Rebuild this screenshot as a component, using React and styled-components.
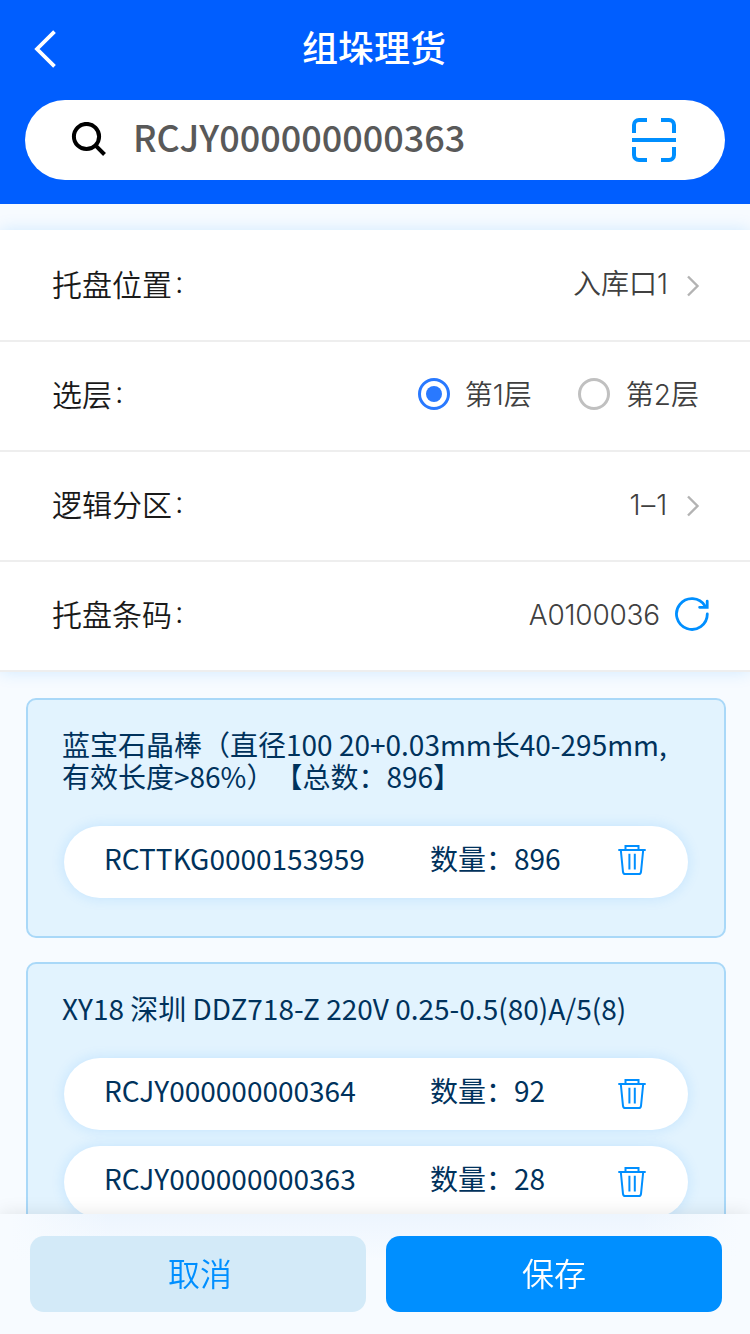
import React, { useState } from "react";
import styled, { createGlobalStyle } from "styled-components";

const GlobalStyle = createGlobalStyle`
  *, *::before, *::after { box-sizing: border-box; }
  body {
    margin: 0;
    background: #f7fbff;
    font-family: "Noto Sans CJK SC", sans-serif;
    text-spacing-trim: space-all;
    overflow: hidden;
  }
  button { font: inherit; border: 0; padding: 0; background: none; cursor: pointer; }
  svg { display: block; flex: none; }
`;

const Page = styled.div`
  height: 1334px;
  display: flex;
  flex-direction: column;
  overflow: hidden;
  background: #f7fbff;
`;

const Header = styled.header`
  flex: none;
  height: 204px;
  padding: 0 25px;
  background: #005eff;
`;

const TitleBar = styled.div`
  height: 100px;
  display: grid;
  grid-template-columns: 40px 1fr 40px;
  align-items: center;
  padding: 0 2px 2px 8px;
`;

const Title = styled.h1`
  margin: 0;
  color: #fff;
  font-size: 36px;
  font-weight: 500;
  line-height: 52px;
  text-align: center;
  padding: 0 8px 6px 0;
`;

const SearchBox = styled.div`
  height: 80px;
  display: flex;
  align-items: center;
  padding: 0 49px 0 46px;
  border-radius: 40px;
  background: #fff;
`;

const SearchText = styled.span`
  flex: 1;
  margin-left: 26px;
  padding-bottom: 8px;
  color: #595959;
  font-size: 36px;
  font-weight: 500;
  line-height: 54px;
`;

const Form = styled.section`
  flex: none;
  margin-top: 26px;
  background: #fff;
  border-bottom: 2px solid #eeeeee;
  box-shadow: 0 0 16px rgba(0, 144, 255, 0.16);
`;

const FormRow = styled.div`
  height: 110px;
  display: flex;
  align-items: center;
  justify-content: space-between;
  padding: 0 ${(p) => p.$right || 50}px ${(p) => p.$bottom || 0}px 52px;
  border-top: ${(p) => (p.$first ? 0 : 2)}px solid #eeeeee;
`;

const Label = styled.span`
  display: flex;
  align-items: center;
  color: #1a1a1a;
  font-size: 30px;
  line-height: 44px;
  font-weight: 350;
  padding-bottom: ${(p) => p.$lift}px;
`;

const Colon = styled.span`
  font-family: Inter, sans-serif;
  margin-left: 3px;
  padding-bottom: 2px;
`;

const Value = styled.span`
  display: flex;
  align-items: center;
  color: #404040;
  font-family: Inter, "Noto Sans CJK SC", sans-serif;
  font-size: 28px;
  font-weight: 350;
  line-height: 40px;
  letter-spacing: ${(p) => p.$spacing || 0}px;
  gap: ${(p) => p.$gap || 18}px;
`;

const ValueText = styled.span`
  padding-top: ${(p) => p.$drop || 0}px;
  padding-bottom: ${(p) => p.$lift || 0}px;
`;

const RadioGroup = styled.div`
  display: flex;
  gap: 46px;
`;

const RadioOption = styled.button`
  display: flex;
  align-items: center;
  gap: ${(p) => p.$gap}px;
`;

const RadioMark = styled.span`
  width: 32px;
  height: 32px;
  display: grid;
  place-items: center;
  border: 3px solid ${(p) => (p.$on ? "#2979ff" : "#c0c0c0")};
  border-radius: 50%;

  &::after {
    content: "";
    width: 16px;
    height: 16px;
    border-radius: 50%;
    background: ${(p) => (p.$on ? "#2979ff" : "transparent")};
  }
`;

const Goods = styled.main`
  display: flex;
  flex-direction: column;
  gap: 24px;
  padding: 26px 24px 0 26px;
`;

const Card = styled.article`
  flex: none;
  padding: 28px 36px 38px;
  border: 2px solid #a9d8f8;
  border-radius: 10px;
  background: #e2f3fe;
`;

const CardTitle = styled.h2`
  margin: 0 0 34px -2px;
  color: #00325c;
  font-size: 28px;
  font-weight: 400;
  line-height: 32px;
  white-space: pre-line;
`;

const ItemList = styled.div`
  display: flex;
  flex-direction: column;
  gap: 16px;
`;

const Item = styled.div`
  height: 72px;
  display: grid;
  grid-template-columns: 326px 188px 28px;
  align-items: center;
  padding-left: 40px;
  border-radius: 36px;
  background: #fff;
  box-shadow: 0 0 14px rgba(0, 144, 255, 0.14);
  color: #00325c;
  font-size: 28px;
  line-height: 40px;
`;

const ItemText = styled.span`
  padding-bottom: 8px;
`;

const DeleteButton = styled.button`
  padding-bottom: ${(p) => p.$lift}px;
`;

const Footer = styled.footer`
  position: fixed;
  left: 0;
  bottom: 0;
  width: 750px;
  height: 120px;
  display: grid;
  grid-template-columns: 336px 336px;
  gap: 20px;
  padding: 22px 28px 22px 30px;
  background:
    linear-gradient(to right, #f7fbff 10px, rgba(247, 251, 255, 0) 110px, rgba(247, 251, 255, 0) 640px, #f7fbff 740px),
    linear-gradient(#edf5fe, #f7fbff 46px);
  box-shadow: 0 0 18px rgba(0, 0, 0, 0.1);
`;

const ActionButton = styled.button`
  border-radius: 14px;
  padding: 0 0 4px ${(p) => (p.$primary ? 0 : 4)}px;
  background: ${(p) => (p.$primary ? "#008fff" : "#d3eaf8")};
  color: ${(p) => (p.$primary ? "#fff" : "#008fff")};
  font-size: 32px;
  font-weight: 350;
`;

const BackIcon = () => (
  <svg width="24" height="38" viewBox="0 0 24 38" fill="none" stroke="#fff" strokeWidth="3.8">
    <path d="M21.5 1.7 4 19 21.5 36.3" />
  </svg>
);

const SearchIcon = () => (
  <svg width="36" height="36" viewBox="0 0 36 36" fill="none" stroke="#000" strokeWidth="4">
    <circle cx="15.5" cy="14.5" r="12.6" />
    <path d="M24.2 23.2 33.5 32.5" />
  </svg>
);

const ScanIcon = () => (
  <svg width="44" height="44" viewBox="0 0 44 44" fill="none" stroke="#008fff" strokeWidth="4">
    <path d="M2 15V7a5 5 0 0 1 5-5h8M29 2h8a5 5 0 0 1 5 5v8M42 29v8a5 5 0 0 1-5 5h-8M15 42H7a5 5 0 0 1-5-5v-8M0 22h44" />
  </svg>
);

const ChevronIcon = () => (
  <svg width="14" height="22" viewBox="0 0 14 22" fill="none" stroke="#b3b3b3" strokeWidth="2.4">
    <path d="M2 1.5 11.5 11 2 20.5" />
  </svg>
);

const RefreshIcon = () => (
  <svg width="36" height="36" viewBox="0 0 36 36" fill="none" stroke="#008fff" strokeWidth="2.8" strokeLinecap="round">
    <path d="M33.3 18A15.4 15.4 0 1 1 31 9.9" />
    <path d="M33.2 5.2v6.1h-7.6" />
  </svg>
);

const TrashIcon = () => (
  <svg width="28" height="30" viewBox="0 0 28 30" fill="none" stroke="#008fff" strokeWidth="2">
    <path d="M0.3 5h27.4M7.5 5V1h13v4" />
    <path d="M2.8 5 5 26.8Q5.2 29 7.2 29H20.8Q22.8 29 23 26.8L25.2 5" />
    <path d="M11.4 8.7V24.5M16.8 8.7V24.5" />
  </svg>
);

const goods = [
  {
    title: "蓝宝石晶棒（直径100 20+0.03mm长40-295mm,\n有效长度>86%）【总数：896】",
    items: [{ code: "RCTTKG0000153959", count: 896 }],
    lift: 4,
  },
  {
    title: "XY18 深圳 DDZ718-Z 220V 0.25-0.5(80)A/5(8)",
    items: [
      { code: "RCJY000000000364", count: 92 },
      { code: "RCJY000000000363", count: 28 },
    ],
    lift: 0,
  },
];

const FieldLabel = ({ lift = 6, children }) => (
  <Label $lift={lift}>
    {children}
    <Colon>:</Colon>
  </Label>
);

export default function App() {
  const [layer, setLayer] = useState(1);

  return (
    <Page>
      <GlobalStyle />
      <Header>
        <TitleBar>
          <BackIcon />
          <Title>组垛理货</Title>
        </TitleBar>
        <SearchBox>
          <SearchIcon />
          <SearchText>RCJY000000000363</SearchText>
          <ScanIcon />
        </SearchBox>
      </Header>

      <Form>
        <FormRow $first>
          <FieldLabel lift={4}>托盘位置</FieldLabel>
          <Value>
            <ValueText $lift={2}>入库口1</ValueText>
            <ValueText $drop={2}>
              <ChevronIcon />
            </ValueText>
          </Value>
        </FormRow>
        <FormRow $right={51} $bottom={4}>
          <FieldLabel lift={2}>选层</FieldLabel>
          <RadioGroup>
            {[1, 2].map((n) => (
              <RadioOption key={n} $gap={n === 1 ? 15 : 16} onClick={() => setLayer(n)}>
                <RadioMark $on={layer === n} />
                <Value>
                  <ValueText $drop={1}>第{n}层</ValueText>
                </Value>
              </RadioOption>
            ))}
          </RadioGroup>
        </FormRow>
        <FormRow>
          <FieldLabel>逻辑分区</FieldLabel>
          <Value $spacing={0.8}>
            <ValueText $lift={2}>1–1</ValueText>
            <ChevronIcon />
          </Value>
        </FormRow>
        <FormRow $right={40} $bottom={4}>
          <FieldLabel lift={2}>托盘条码</FieldLabel>
          <Value $gap={14} $spacing={-0.2}>
            <ValueText $drop={1}>A0100036</ValueText>
            <RefreshIcon />
          </Value>
        </FormRow>
      </Form>

      <Goods>
        {goods.map((g) => (
          <Card key={g.title}>
            <CardTitle>{g.title}</CardTitle>
            <ItemList>
              {g.items.map((it) => (
                <Item key={it.code}>
                  <ItemText>{it.code}</ItemText>
                  <ItemText>数量：{it.count}</ItemText>
                  <DeleteButton $lift={g.lift} aria-label="删除">
                    <TrashIcon />
                  </DeleteButton>
                </Item>
              ))}
            </ItemList>
          </Card>
        ))}
      </Goods>

      <Footer>
        <ActionButton>取消</ActionButton>
        <ActionButton $primary>保存</ActionButton>
      </Footer>
    </Page>
  );
}
